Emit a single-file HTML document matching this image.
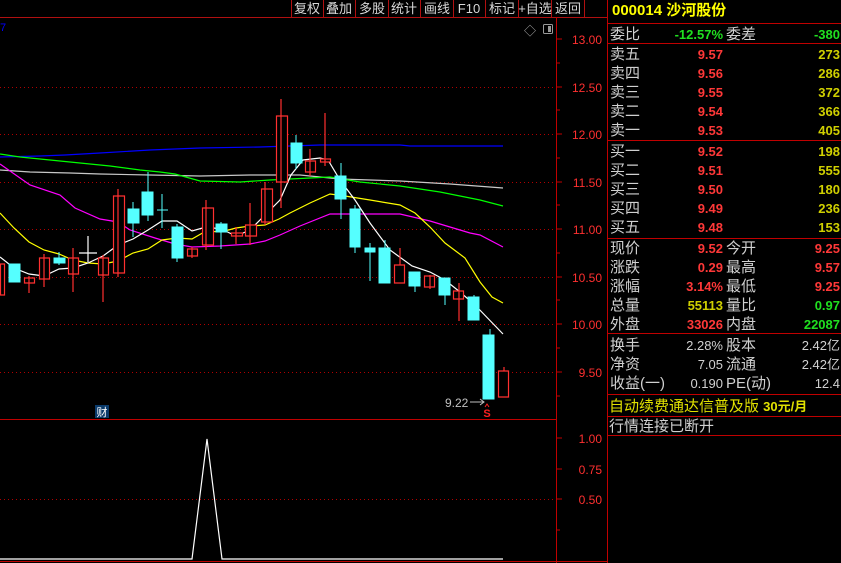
<!DOCTYPE html>
<html><head><meta charset="utf-8"><style>
html,body{margin:0;padding:0;background:#000;width:841px;height:563px;overflow:hidden}
svg{display:block}
text{font-family:"Liberation Sans","Noto Sans CJK SC",sans-serif}
</style></head><body>
<svg width="841" height="563" viewBox="0 0 841 563" xmlns="http://www.w3.org/2000/svg">
<rect width="841" height="563" fill="#000"/>
<line x1="0" y1="17.5" x2="607" y2="17.5" stroke="#b01010"/>
<g stroke="#b01010">
<line x1="291.5" y1="0" x2="291.5" y2="17"/><line x1="323.5" y1="0" x2="323.5" y2="17"/><line x1="355.5" y1="0" x2="355.5" y2="17"/><line x1="388.5" y1="0" x2="388.5" y2="17"/><line x1="420.5" y1="0" x2="420.5" y2="17"/><line x1="453.5" y1="0" x2="453.5" y2="17"/><line x1="485.5" y1="0" x2="485.5" y2="17"/><line x1="518.5" y1="0" x2="518.5" y2="17"/><line x1="551.5" y1="0" x2="551.5" y2="17"/><line x1="584.5" y1="0" x2="584.5" y2="17"/>
</g>
<g fill="#d8d8d8" font-size="13" text-anchor="middle">
<text x="307" y="13">复权</text><text x="339" y="13">叠加</text><text x="372" y="13">多股</text><text x="404" y="13">统计</text><text x="437" y="13">画线</text><text x="469" y="13">F10</text><text x="502" y="13">标记</text><text x="535" y="13">+自选</text><text x="568" y="13">返回</text>
</g>
<text x="0" y="31" fill="#0000ff" font-size="11">7</text>
<text x="524" y="35" fill="#aaa" font-size="12">◇</text>
<rect x="543.5" y="24.5" width="9" height="9" fill="none" stroke="#999" rx="1"/><rect x="548" y="26" width="3" height="6" fill="#999"/>
<line x1="556.5" y1="17" x2="556.5" y2="563" stroke="#c00000"/>
<line x1="607.5" y1="0" x2="607.5" y2="563" stroke="#c00000"/>
<line x1="0" y1="419.5" x2="556" y2="419.5" stroke="#c00000"/>
<line x1="0" y1="561.5" x2="607" y2="561.5" stroke="#c00000"/>
<g stroke="#c00000">
<line x1="556" y1="39" x2="562" y2="39"/><line x1="556" y1="63" x2="560" y2="63"/><line x1="556" y1="87" x2="562" y2="87"/><line x1="556" y1="110" x2="560" y2="110"/><line x1="556" y1="134" x2="562" y2="134"/><line x1="556" y1="158" x2="560" y2="158"/><line x1="556" y1="182" x2="562" y2="182"/><line x1="556" y1="205" x2="560" y2="205"/><line x1="556" y1="229" x2="562" y2="229"/><line x1="556" y1="253" x2="560" y2="253"/><line x1="556" y1="277" x2="562" y2="277"/><line x1="556" y1="300" x2="560" y2="300"/><line x1="556" y1="324" x2="562" y2="324"/><line x1="556" y1="348" x2="560" y2="348"/><line x1="556" y1="372" x2="562" y2="372"/><line x1="556" y1="396" x2="560" y2="396"/>
<line x1="556" y1="438" x2="562" y2="438"/><line x1="556" y1="469" x2="562" y2="469"/><line x1="556" y1="499" x2="562" y2="499"/><line x1="556" y1="530" x2="560" y2="530"/>
</g>
<g fill="#ff3030" font-size="12" text-anchor="end">
<text x="602" y="44">13.00</text><text x="602" y="92">12.50</text><text x="602" y="139">12.00</text><text x="602" y="187">11.50</text><text x="602" y="234">11.00</text><text x="602" y="282">10.50</text><text x="602" y="329">10.00</text><text x="602" y="377">9.50</text>
<text x="602" y="443">1.00</text><text x="602" y="474">0.75</text><text x="602" y="504">0.50</text>
</g>
<g stroke="#b00000" stroke-dasharray="1,3">
<line x1="0" y1="87.5" x2="556" y2="87.5"/><line x1="0" y1="134.5" x2="556" y2="134.5"/><line x1="0" y1="182.5" x2="556" y2="182.5"/><line x1="0" y1="229.5" x2="556" y2="229.5"/><line x1="0" y1="277.5" x2="556" y2="277.5"/><line x1="0" y1="324.5" x2="556" y2="324.5"/><line x1="0" y1="372.5" x2="556" y2="372.5"/><line x1="0" y1="499.5" x2="556" y2="499.5"/>
</g>
<g fill="none" stroke-width="1.2">
<polyline stroke="#0000ff" points="0,157 40,156 65,155 100,153 150,150 200,148 260,147 320,145 400,145 410,146 503,146"/>
<polyline stroke="#c8c8c8" points="0,170 30,172 70,173 100,174 150,175 200,176 250,175 300,175 340,179 400,181 450,184 503,188"/>
<polyline stroke="#00ff00" points="0,154 20,157 40,159 60,161 80,163 110,166 140,170 160,172 175,174 200,181 240,182 270,180 330,177 360,182 400,186 440,192 480,200 503,206"/>
<polyline stroke="#ff00ff" points="0,164 30,185 60,195 75,208 100,219 118,222 130,230 155,238 175,244 192,247 220,246 250,244 265,241 280,235 300,226 330,214 360,214 400,214 430,221 470,233 480,235 503,247"/>
<polyline stroke="#ffff00" points="0,213 14,228 29,242 44,250 59,254 73,260 88,263 103,264 118,261 133,253 148,249 162,240 177,238 192,239 206,231 221,232 236,228 250,226 265,225 279,219 290,213 310,203 330,194 345,196 370,200 400,205 415,213 430,227 445,243 465,258 480,282 492,297 503,303"/>
<polyline stroke="#ffffff" points="0,257 14,268 29,274 44,276 59,269 73,268 88,263 103,256 118,245 133,239 148,230 162,221 177,221 192,231 206,227 221,229 236,236 250,230 265,215 280,200 291,175 303,160 320,158 328,160 340,180 355,200 370,223 390,250 412,266 430,272 445,280 460,292 475,305 503,334"/>
</g>
<g stroke="#ff3030" fill="#000" stroke-width="1.2">
<path d="M0.5,264H4.5V295H0.5Z"/>
<path d="M29,276V293M24.5,278H34.5V283H24.5Z"/>
<path d="M44,254V287M39.5,258H49.5V279H39.5Z"/>
<path d="M73,248V292M68.5,258H78.5V274H68.5Z"/>
<path d="M103,255V302M98.5,258H108.5V275H98.5Z"/>
<path d="M118,189V277M113.5,196H124.5V273H113.5Z"/>
<path d="M192,247V258M187.5,249H197.5V256H187.5Z"/>
<path d="M206,200V250M202.5,208H213.5V245H202.5Z"/>
<path d="M236,227V244M231.5,233H242.5V236H231.5Z"/>
<path d="M250,203V245M245.5,225H256.5V236H245.5Z"/>
<path d="M265,182V225M261.5,189H272.5V222H261.5Z"/>
<path d="M281,99V208M276.5,116H287.5V182H276.5Z"/>
<path d="M310,149V176M305.5,161H315.5V172H305.5Z"/>
<path d="M325,113V166M320.5,159H330.5V162H320.5Z"/>
<path d="M400,248V265M394.5,265H404.5V283H394.5Z"/>
<path d="M430,275V289M424.5,276H434.5V287H424.5Z"/>
<path d="M459,283V321M453.5,291H463.5V299H453.5Z"/>
<path d="M504,367V371M498.5,371H508.5V397H498.5Z"/>
</g>
<g fill="#55ffff" stroke="#55ffff">
<rect x="9" y="264" width="11" height="18"/>
<path d="M59,252V265" fill="none"/><rect x="54" y="258" width="11" height="5"/>
<path d="M133,202V237" fill="none"/><rect x="128" y="209" width="11" height="14"/>
<path d="M148,172V221" fill="none"/><rect x="142" y="192" width="11" height="23"/>
<path d="M162,194V228M157,210H168" fill="none"/>
<path d="M177,224V262" fill="none"/><rect x="172" y="227" width="11" height="31"/>
<path d="M221,222V249" fill="none"/><rect x="216" y="224" width="11" height="8"/>
<path d="M296,135V169" fill="none"/><rect x="291" y="143" width="11" height="20"/>
<path d="M341,163V219" fill="none"/><rect x="335" y="176" width="11" height="23"/>
<path d="M355,205V253" fill="none"/><rect x="350" y="209" width="10" height="38"/>
<path d="M370,243V281" fill="none"/><rect x="365" y="248" width="10" height="4"/>
<path d="M385,240V283" fill="none"/><rect x="379" y="248" width="11" height="35"/>
<path d="M415,272V292" fill="none"/><rect x="409" y="272" width="11" height="14"/>
<path d="M445,278V305" fill="none"/><rect x="439" y="278" width="11" height="17"/>
<path d="M474,295V320" fill="none"/><rect x="468" y="297" width="11" height="23"/>
<path d="M490,329V399" fill="none"/><rect x="483" y="335" width="11" height="64"/>
</g>
<path d="M88,236V262M79,253H97" stroke="#fff" stroke-width="1.2"/>
<text x="445" y="407" fill="#c0c0c0" font-size="12">9.22</text>
<path d="M470,402H484M480,399L484,402L480,405" stroke="#c0c0c0" fill="none"/>
<text x="487" y="417" fill="#ff2020" font-size="11" font-weight="bold" text-anchor="middle">S</text>
<path d="M485,407L487,404L489,407" stroke="#ff2020" fill="none"/>
<rect x="95" y="405" width="14" height="13" fill="#0a3a6a"/>
<text x="102" y="416" fill="#fff" font-size="11" text-anchor="middle">财</text>
<polyline fill="none" stroke="#fff" stroke-width="1.2" points="0,559 192,559 207,439 222,559 503,559"/>
<text x="612" y="15" fill="#ffff00" font-size="15" font-weight="bold">000014 沙河股份</text>
<g stroke="#c00000">
<line x1="607" y1="23.5" x2="841" y2="23.5"/><line x1="607" y1="43.5" x2="841" y2="43.5"/><line x1="607" y1="140.5" x2="841" y2="140.5"/><line x1="607" y1="238.5" x2="841" y2="238.5"/><line x1="607" y1="333.5" x2="841" y2="333.5"/><line x1="607" y1="394.5" x2="841" y2="394.5"/><line x1="607" y1="416.5" x2="841" y2="416.5"/><line x1="607" y1="435.5" x2="841" y2="435.5"/>
</g>
<g font-size="15" fill="#d0d0d0">
<text x="610" y="39">委比</text><text x="726" y="39">委差</text>
<text x="610" y="59">卖五</text><text x="610" y="78">卖四</text><text x="610" y="97">卖三</text><text x="610" y="116">卖二</text><text x="610" y="135">卖一</text>
<text x="610" y="156">买一</text><text x="610" y="175">买二</text><text x="610" y="194">买三</text><text x="610" y="213">买四</text><text x="610" y="232">买五</text>
<text x="610" y="253">现价</text><text x="726" y="253">今开</text>
<text x="610" y="272">涨跌</text><text x="726" y="272">最高</text>
<text x="610" y="291">涨幅</text><text x="726" y="291">最低</text>
<text x="610" y="310">总量</text><text x="726" y="310">量比</text>
<text x="610" y="329">外盘</text><text x="726" y="329">内盘</text>
<text x="610" y="350">换手</text><text x="726" y="350">股本</text>
<text x="610" y="369">净资</text><text x="726" y="369">流通</text>
<text x="610" y="388">收益(一)</text><text x="726" y="388">PE(动)</text>
<text x="609" y="431">行情连接已断开</text>
</g>
<text x="609" y="411" font-size="15" fill="#e0e000">自动续费通达信普及版 <tspan font-weight="bold" font-size="13">30元/月</tspan></text>
<g font-size="13" font-weight="bold" text-anchor="end">
<text x="723" y="39" fill="#20e020">-12.57%</text><text x="840" y="39" fill="#20e020">-380</text>
<g fill="#ff3838"><text x="723" y="59">9.57</text><text x="723" y="78">9.56</text><text x="723" y="97">9.55</text><text x="723" y="116">9.54</text><text x="723" y="135">9.53</text><text x="723" y="156">9.52</text><text x="723" y="175">9.51</text><text x="723" y="194">9.50</text><text x="723" y="213">9.49</text><text x="723" y="232">9.48</text>
<text x="723" y="253">9.52</text><text x="840" y="253">9.25</text><text x="723" y="272">0.29</text><text x="840" y="272">9.57</text><text x="723" y="291">3.14%</text><text x="840" y="291">9.25</text><text x="723" y="329">33026</text></g>
<g fill="#d0d000"><text x="840" y="59">273</text><text x="840" y="78">286</text><text x="840" y="97">372</text><text x="840" y="116">366</text><text x="840" y="135">405</text><text x="840" y="156">198</text><text x="840" y="175">555</text><text x="840" y="194">180</text><text x="840" y="213">236</text><text x="840" y="232">153</text><text x="723" y="310">55113</text></g>
<text x="840" y="310" fill="#20e020">0.97</text><text x="840" y="329" fill="#20e020">22087</text>
<g fill="#d0d0d0" font-weight="normal"><text x="723" y="350">2.28%</text><text x="840" y="350">2.42亿</text><text x="723" y="369">7.05</text><text x="840" y="369">2.42亿</text><text x="723" y="388">0.190</text><text x="840" y="388">12.4</text></g>
</g>
</svg>
</body></html>
